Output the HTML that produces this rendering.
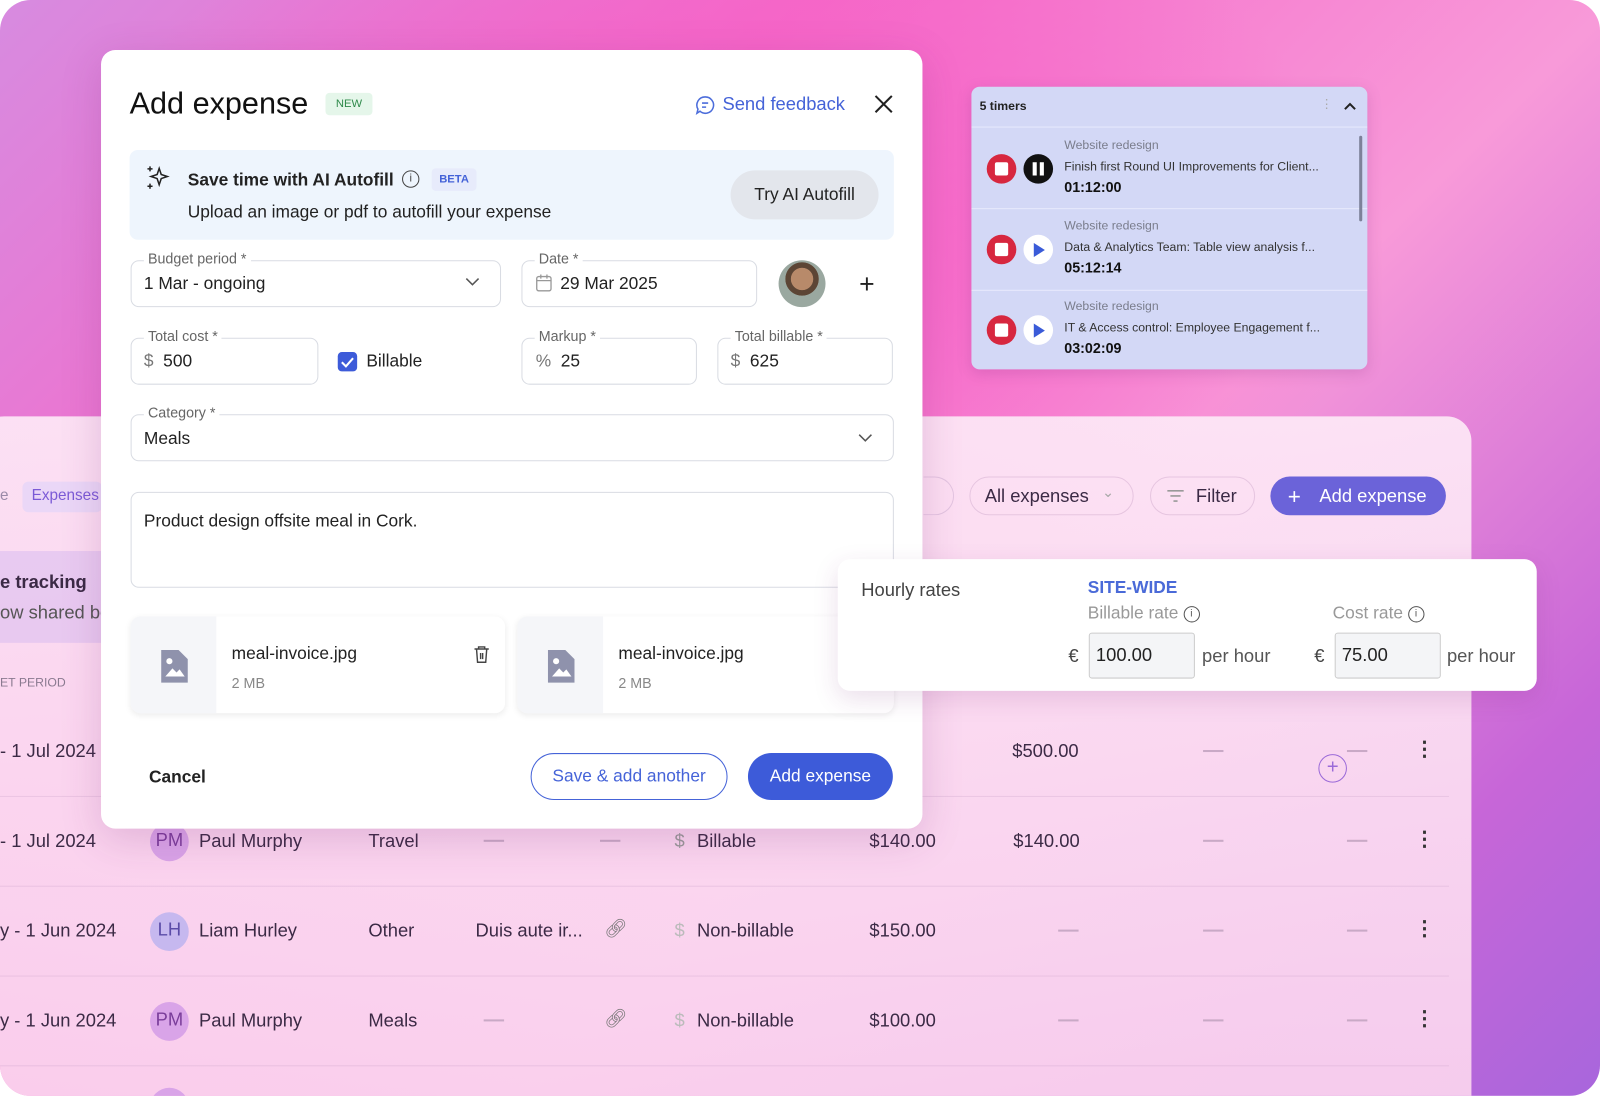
<!DOCTYPE html>
<html><head><meta charset="utf-8"><style>
*{box-sizing:border-box;margin:0;padding:0}
body{width:1600px;height:1096px;overflow:hidden;background:#fff;font-family:"Liberation Sans",sans-serif}
#w{position:absolute;left:0;top:0;width:1568px;height:1074px;transform:scale(1.020408);transform-origin:0 0;border-radius:30px;overflow:hidden}
.bg{position:absolute;inset:0;background:radial-gradient(ellipse 900px 600px at 700px 250px,#f65fc6 0%,rgba(246,95,198,0) 70%),linear-gradient(135deg,#d78be0 0%,#f56ac9 30%,#f89ad9 60%,#c766d8 85%,#a866dc 100%)}
.abs{position:absolute}
.table{position:absolute;left:-20px;top:408px;width:1462px;height:700px;background:linear-gradient(180deg,rgba(253,232,246,.93),rgba(250,210,238,.93));border-radius:24px}
.row{position:absolute;left:0;width:1420px;height:1px;background:rgba(200,160,200,.3)}
.t{position:absolute;font-size:18px;color:#3b2a45;white-space:nowrap}
.dash{position:absolute;width:20px;height:2px;background:#c9a9c6}
.av{position:absolute;width:38px;height:38px;border-radius:50%;background:#d9a4e8;color:#7a3d9a;font-size:18px;text-align:center;line-height:34px}
.kb{position:absolute;font-size:20px;font-weight:bold;color:#333}
.modal{position:absolute;left:99px;top:49px;width:805px;height:763px;background:#fff;border-radius:14px;box-shadow:0 10px 40px rgba(120,40,120,.2)}
.fld{position:absolute;border:1.5px solid #d9dce3;border-radius:8px;background:#fff}
.lbl{position:absolute;top:-11px;left:12px;background:#fff;padding:0 4px;font-size:14px;color:#666}
.val{position:absolute;font-size:17px;color:#222;white-space:nowrap}
.card{position:absolute;border-radius:10px;background:#fff;box-shadow:0 2px 6px rgba(0,0,0,.08)}
</style></head><body><div id="w">
<div class="bg"></div>
<div class="table"></div>
<div class="abs" style="left:22px;top:472px;width:78px;height:30px;background:#ead7f7;border-radius:6px"></div>
<div class="t" style="left:0;top:477px;font-size:15px;color:#9a8aa8">e</div>
<div class="t" style="left:31px;top:477px;font-size:15px;color:#7b5ad6">Expenses</div>
<div class="abs" style="left:0;top:540px;width:100px;height:90px;background:rgba(220,190,240,.6)"></div>
<div class="t" style="left:0;top:560px;font-weight:bold">e tracking</div>
<div class="t" style="left:0;top:590px;color:#555">ow shared be</div>
<div class="t" style="left:0;top:662px;font-size:12px;color:#8a7a90">ET PERIOD</div>
<div class="abs" style="left:905px;top:467px;width:30px;height:38px;border:1.5px solid rgba(220,190,220,.8);border-left:none;border-radius:0 20px 20px 0"></div>
<div class="abs" style="left:950px;top:467px;width:161px;height:38px;border:1.5px solid #e6c5e0;border-radius:20px"></div>
<div class="t" style="left:965px;top:476px;color:#3b2a45">All expenses</div>
<div class="t" style="left:1080px;top:474px;color:#aaa;font-size:14px">⌄</div>
<div class="abs" style="left:1127px;top:467px;width:103px;height:38px;border:1.5px solid #e6c5e0;border-radius:20px"></div>
<svg class="abs" style="left:1142px;top:477px" width="20" height="18"><path d="M2 4h16M5 9h10M8 14h4" stroke="#999" stroke-width="1.6"/></svg>
<div class="t" style="left:1172px;top:476px">Filter</div>
<div class="abs" style="left:1245px;top:467px;width:172px;height:38px;background:#6b63d9;border-radius:20px"></div>
<div class="t" style="left:1262px;top:474px;color:#fff;font-size:22px">+</div>
<div class="t" style="left:1293px;top:476px;color:#fff">Add expense</div>
<div class="row" style="top:780px"></div><div class="row" style="top:868px"></div><div class="row" style="top:956px"></div><div class="row" style="top:1044px"></div>
<div class="t" style="left:0;top:726px">- 1 Jul 2024</div>
<div class="t" style="left:880px;top:726px">0</div>
<div class="t" style="left:992px;top:726px">$500.00</div>
<div class="dash" style="left:1179px;top:735px"></div><div class="dash" style="left:1320px;top:735px"></div>
<div class="abs" style="left:1292px;top:739px;width:28px;height:28px;border:1.5px solid #9b6ad8;border-radius:50%;color:#9b6ad8;text-align:center;line-height:24px;font-size:20px">+</div>
<div class="kb" style="left:1386px;top:722px">⋮</div>
<div class="t" style="left:0;top:814px">- 1 Jul 2024</div>
<div class="av" style="left:147px;top:806px">PM</div>
<div class="t" style="left:195px;top:814px">Paul Murphy</div>
<div class="t" style="left:361px;top:814px">Travel</div>
<div class="dash" style="left:474px;top:823px"></div><div class="dash" style="left:588px;top:823px"></div>
<div class="t" style="left:661px;top:814px;color:#999">$</div>
<div class="t" style="left:683px;top:814px">Billable</div>
<div class="t" style="left:852px;top:814px">$140.00</div>
<div class="t" style="left:993px;top:814px">$140.00</div>
<div class="dash" style="left:1179px;top:823px"></div><div class="dash" style="left:1320px;top:823px"></div>
<div class="kb" style="left:1386px;top:810px">⋮</div>
<div class="t" style="left:0;top:902px">y - 1 Jun 2024</div>
<div class="av" style="left:147px;top:894px;background:#c6b8ef;color:#5a4ba8">LH</div>
<div class="t" style="left:195px;top:902px">Liam Hurley</div>
<div class="t" style="left:361px;top:902px">Other</div>
<div class="t" style="left:466px;top:902px">Duis aute ir...</div>
<div class="t" style="left:592px;top:900px;color:#777">🔗︎</div>
<div class="t" style="left:661px;top:902px;color:#bbb">$</div>
<div class="t" style="left:683px;top:902px">Non-billable</div>
<div class="t" style="left:852px;top:902px">$150.00</div>
<div class="dash" style="left:1037px;top:911px"></div><div class="dash" style="left:1179px;top:911px"></div><div class="dash" style="left:1320px;top:911px"></div>
<div class="kb" style="left:1386px;top:898px">⋮</div>
<div class="t" style="left:0;top:990px">y - 1 Jun 2024</div>
<div class="av" style="left:147px;top:982px">PM</div>
<div class="t" style="left:195px;top:990px">Paul Murphy</div>
<div class="t" style="left:361px;top:990px">Meals</div>
<div class="dash" style="left:474px;top:999px"></div>
<div class="t" style="left:592px;top:988px;color:#777">🔗︎</div>
<div class="t" style="left:661px;top:990px;color:#bbb">$</div>
<div class="t" style="left:683px;top:990px">Non-billable</div>
<div class="t" style="left:852px;top:990px">$100.00</div>
<div class="dash" style="left:1037px;top:999px"></div><div class="dash" style="left:1179px;top:999px"></div><div class="dash" style="left:1320px;top:999px"></div>
<div class="kb" style="left:1386px;top:986px">⋮</div>
<div class="av" style="left:147px;top:1066px"></div>

<div class="abs" style="left:952px;top:85px;width:388px;height:277px;background:#d3d8f6;border-radius:8px;box-shadow:0 4px 14px rgba(120,40,120,.2);overflow:hidden">
 <div class="t" style="left:8px;top:12px;font-size:12px;font-weight:bold;color:#222">5 timers</div>
 <div class="t" style="left:342px;top:10px;font-size:12px;color:#aaa">⋮</div>
 <svg class="abs" style="left:364px;top:14px" width="14" height="10"><path d="M2 8l5-5 5 5" stroke="#222" stroke-width="2" fill="none"/></svg>
 <div class="abs" style="left:0;top:39px;width:388px;height:1px;background:#e7eafc"></div>
 <div class="abs" style="left:0;top:119px;width:388px;height:1px;background:#e7eafc"></div>
 <div class="abs" style="left:0;top:199px;width:388px;height:1px;background:#e7eafc"></div>
 <div class="abs" style="left:380px;top:48px;width:3px;height:84px;background:#7d8199;border-radius:2px"></div>
</div>
<div id="tm"></div>
<script>
var rows=[["Finish first Round UI Improvements for Client...","01:12:00",1],["Data & Analytics Team: Table view analysis f...","05:12:14",0],["IT & Access control: Employee Engagement f...","03:02:09",0]];
var h="";rows.forEach(function(r,i){var y=85+40+i*79;
h+='<div class="abs" style="left:967px;top:'+(y+26)+'px;width:29px;height:29px;border-radius:50%;background:#d7273f"><div class="abs" style="left:8px;top:8px;width:13px;height:13px;background:#fff;border-radius:2px"></div></div>';
if(r[2])h+='<div class="abs" style="left:1003px;top:'+(y+26)+'px;width:29px;height:29px;border-radius:50%;background:#111"><div class="abs" style="left:9px;top:8px;width:4px;height:13px;background:#fff"></div><div class="abs" style="left:16px;top:8px;width:4px;height:13px;background:#fff"></div></div>';
else h+='<div class="abs" style="left:1003px;top:'+(y+26)+'px;width:29px;height:29px;border-radius:50%;background:#fff"><svg class="abs" style="left:10px;top:8px" width="12" height="14"><path d="M0 0L11 7L0 14Z" fill="#3a5bd8"/></svg></div>';
h+='<div class="t" style="left:1043px;top:'+(y+10)+'px;font-size:12px;color:#7a7d8c">Website redesign</div>';
h+='<div class="t" style="left:1043px;top:'+(y+31)+'px;font-size:12px;color:#333">'+r[0]+'</div>';
h+='<div class="t" style="left:1043px;top:'+(y+50)+'px;font-size:14px;font-weight:bold;color:#111">'+r[1]+'</div>';});
document.getElementById("tm").innerHTML=h;
</script>

<div class="modal">
 <div class="t" style="left:28px;top:36px;font-size:30px;color:#111">Add expense</div>
 <div class="abs" style="left:220px;top:42px;width:46px;height:22px;background:#e5f6ea;border-radius:4px;font-size:11px;color:#2f8a4b;text-align:center;line-height:22px">NEW</div>
 <svg class="abs" style="left:582px;top:44px" width="20" height="20"><path d="M10 2a8 8 0 1 1-5 14l-3 2 1-4A8 8 0 0 1 10 2z M7 8h6M7 12h4" stroke="#4c6ddb" stroke-width="1.5" fill="none"/></svg>
 <div class="t" style="left:609px;top:43px;color:#4563d8">Send feedback</div>
 <svg class="abs" style="left:757px;top:43px" width="20" height="20"><path d="M2 2l16 16M18 2L2 18" stroke="#222" stroke-width="2"/></svg>
 <div class="abs" style="left:28px;top:98px;width:749px;height:88px;background:#eef5fd;border-radius:8px"></div>
 <svg class="abs" style="left:43px;top:112px" width="26" height="26"><path d="M14 4l2 6 6 2-6 2-2 6-2-6-6-2 6-2z M5 2v5M2.5 4.5h5M5 19v5M2.5 21.5h5" stroke="#222" stroke-width="1.5" fill="none"/></svg>
 <div class="t" style="left:85px;top:118px;font-size:17px;font-weight:bold;color:#222">Save time with AI Autofill</div>
 <div class="abs" style="left:295px;top:118px;width:17px;height:17px;border:1.5px solid #444;border-radius:50%;font-size:11px;text-align:center;line-height:14px;color:#444">i</div>
 <div class="abs" style="left:324px;top:116px;width:44px;height:22px;background:#e7ebfb;border-radius:4px;font-size:11px;color:#4563d8;text-align:center;line-height:22px;font-weight:bold">BETA</div>
 <div class="t" style="left:85px;top:149px;font-size:17px;color:#222">Upload an image or pdf to autofill your expense</div>
 <div class="abs" style="left:617px;top:118px;width:145px;height:48px;background:#e3e6ec;border-radius:24px;font-size:17px;color:#222;text-align:center;line-height:48px">Try AI Autofill</div>

 <div class="fld" style="left:29px;top:206px;width:363px;height:46px"><div class="lbl">Budget period *</div></div>
 <div class="val" style="left:42px;top:219px">1 Mar - ongoing</div>
 <svg class="abs" style="left:357px;top:223px" width="14" height="9"><path d="M1 1l6 6 6-6" stroke="#555" stroke-width="1.5" fill="none"/></svg>
 <div class="fld" style="left:412px;top:206px;width:231px;height:46px"><div class="lbl">Date *</div></div>
 <svg class="abs" style="left:426px;top:219px" width="16" height="18"><rect x="1" y="3" width="14" height="14" rx="2" stroke="#999" fill="none" stroke-width="1.3"/><path d="M1 7h14M5 1v4M11 1v4" stroke="#999" stroke-width="1.3"/></svg>
 <div class="val" style="left:450px;top:219px">29 Mar 2025</div>
 <div class="abs" style="left:664px;top:206px;width:46px;height:46px;border-radius:50%;background:radial-gradient(circle at 50% 40%,#b88a6a 0 30%,#5c4535 31% 45%,#9aa8a0 46%)"></div>
 <div class="t" style="left:743px;top:214px;font-size:26px;color:#222">+</div>

 <div class="fld" style="left:29px;top:282px;width:184px;height:46px"><div class="lbl">Total cost *</div></div>
 <div class="val" style="left:42px;top:295px"><span style="color:#777">$</span>&nbsp; 500</div>
 <div class="abs" style="left:232px;top:296px;width:19px;height:19px;background:#3d5bd9;border-radius:4px"><svg width="19" height="19"><path d="M4 10l4 4 7-8" stroke="#fff" stroke-width="2" fill="none"/></svg></div>
 <div class="val" style="left:260px;top:295px">Billable</div>
 <div class="fld" style="left:412px;top:282px;width:172px;height:46px"><div class="lbl">Markup *</div></div>
 <div class="val" style="left:426px;top:295px"><span style="color:#777">%</span>&nbsp; 25</div>
 <div class="fld" style="left:604px;top:282px;width:172px;height:46px"><div class="lbl">Total billable *</div></div>
 <div class="val" style="left:617px;top:295px"><span style="color:#777">$</span>&nbsp; 625</div>

 <div class="fld" style="left:29px;top:357px;width:748px;height:46px"><div class="lbl">Category *</div></div>
 <div class="val" style="left:42px;top:371px">Meals</div>
 <svg class="abs" style="left:742px;top:376px" width="14" height="9"><path d="M1 1l6 6 6-6" stroke="#555" stroke-width="1.5" fill="none"/></svg>

 <div class="fld" style="left:29px;top:433px;width:748px;height:94px"></div>
 <div class="val" style="left:42px;top:452px">Product design offsite meal in Cork.</div>

 <div class="card" style="left:29px;top:555px;width:367px;height:95px"><div class="abs" style="left:0;top:0;width:84px;height:95px;background:#f5f6f9;border-radius:10px 0 0 10px"></div></div>
 <svg class="abs" style="left:57px;top:586px" width="30" height="36"><path d="M2 2h17l9 9v23H2z" fill="#8f92ac"/><path d="M6 28l7-8 4 4 3-3 5 7z" fill="#fff"/><circle cx="10" cy="13" r="3" fill="#fff"/></svg>
 <div class="val" style="left:128px;top:582px">meal-invoice.jpg</div>
 <div class="val" style="left:128px;top:612px;font-size:14px;color:#888">2 MB</div>
 <svg class="abs" style="left:365px;top:583px" width="16" height="18"><path d="M1 4h14M5 4V2h6v2M3 4l1 13h8l1-13M7 8v6M9 8v6" stroke="#444" stroke-width="1.4" fill="none"/></svg>
 <div class="card" style="left:408px;top:555px;width:369px;height:95px"><div class="abs" style="left:0;top:0;width:84px;height:95px;background:#f5f6f9;border-radius:10px 0 0 10px"></div></div>
 <svg class="abs" style="left:436px;top:586px" width="30" height="36"><path d="M2 2h17l9 9v23H2z" fill="#8f92ac"/><path d="M6 28l7-8 4 4 3-3 5 7z" fill="#fff"/><circle cx="10" cy="13" r="3" fill="#fff"/></svg>
 <div class="val" style="left:507px;top:582px">meal-invoice.jpg</div>
 <div class="val" style="left:507px;top:612px;font-size:14px;color:#888">2 MB</div>

 <div class="val" style="left:47px;top:703px;font-weight:bold">Cancel</div>
 <div class="abs" style="left:421px;top:689px;width:193px;height:46px;border:1.5px solid #4563d8;border-radius:24px;color:#4563d8;font-size:17px;text-align:center;line-height:43px">Save &amp; add another</div>
 <div class="abs" style="left:634px;top:689px;width:142px;height:46px;background:#3d5bd9;border-radius:24px;color:#fff;font-size:17px;text-align:center;line-height:46px">Add expense</div>
</div>

<div class="abs" style="left:821px;top:548px;width:685px;height:129px;background:#fff;border-radius:12px;box-shadow:0 8px 24px rgba(120,40,120,.15)">
 <div class="t" style="left:23px;top:20px;color:#444">Hourly rates</div>
 <div class="t" style="left:245px;top:18px;color:#4a6ad8;font-weight:bold;font-size:17px">SITE-WIDE</div>
 <div class="t" style="left:245px;top:43px;color:#999;font-size:17px">Billable rate <span style="display:inline-block;width:16px;height:16px;border:1.5px solid #555;border-radius:50%;font-size:10px;text-align:center;line-height:13px;color:#555;vertical-align:2px">i</span></div>
 <div class="t" style="left:485px;top:43px;color:#999;font-size:17px">Cost rate <span style="display:inline-block;width:16px;height:16px;border:1.5px solid #555;border-radius:50%;font-size:10px;text-align:center;line-height:13px;color:#555;vertical-align:2px">i</span></div>
 <div class="t" style="left:226px;top:85px;color:#444">€</div>
 <div class="abs" style="left:246px;top:72px;width:104px;height:45px;border:1.5px solid #ccc;background:#f4f5f7;border-radius:3px"></div>
 <div class="t" style="left:253px;top:84px;color:#222">100.00</div>
 <div class="t" style="left:357px;top:85px;color:#555">per hour</div>
 <div class="t" style="left:467px;top:85px;color:#444">€</div>
 <div class="abs" style="left:487px;top:72px;width:104px;height:45px;border:1.5px solid #ccc;background:#f4f5f7;border-radius:3px"></div>
 <div class="t" style="left:494px;top:84px;color:#222">75.00</div>
 <div class="t" style="left:597px;top:85px;color:#555">per hour</div>
</div>
</div></body></html>
